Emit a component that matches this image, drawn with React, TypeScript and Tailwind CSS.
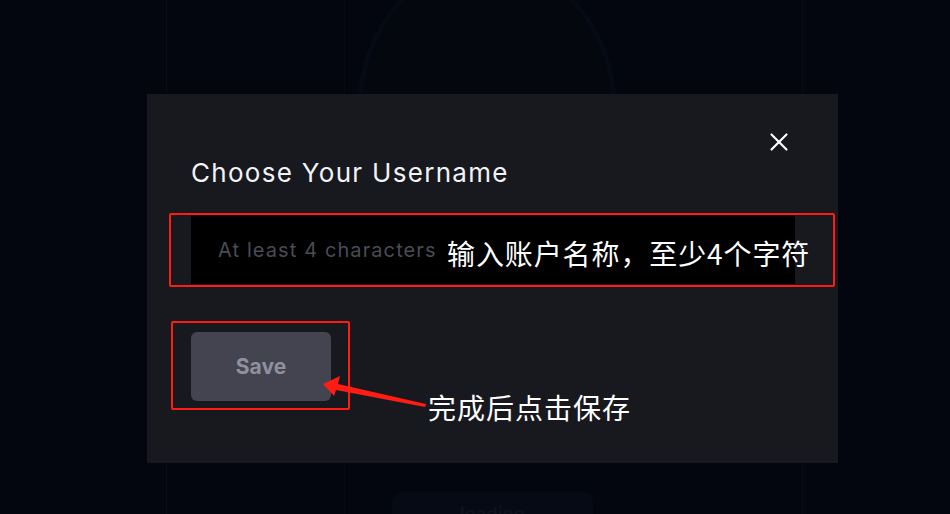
import React from "react";
import { X } from "lucide-react";

export default function App() {
  return (
    <div className="relative w-[950px] h-[514px] overflow-hidden bg-[#03060e] font-['Inter','Noto_Sans',sans-serif]">
      {/* faint page behind the overlay */}
      <div className="absolute inset-0 pointer-events-none">
        <div className="absolute left-[166px] top-0 h-[514px] w-px bg-[#090d16]" />
        <div className="absolute left-[344px] top-0 h-[514px] w-px bg-[#070a13]" />
        <div className="absolute left-[802px] top-0 h-[514px] w-px bg-[#090d16]" />
        <div className="absolute left-[357px] top-[-40px] w-[260px] h-[300px] rounded-[50%] border-[5px] border-[#050a15] bg-[#05070e]" />
        <div className="absolute left-[392px] top-[492px] w-[201px] h-[40px] rounded-[10px] bg-[#060a14] flex justify-center pt-[8px] text-[18px] font-bold text-[#0e121c]">
          loading
        </div>
      </div>

      {/* modal */}
      <div className="relative pt-[94px] pl-[147px]">
        <div className="relative w-[691px] h-[369px] bg-[#18191e] px-[44px] pt-[58px]">
          <button className="absolute right-[44px] top-[33px] text-white">
            <X size={30} strokeWidth={1.7} />
          </button>
          <h2 className="text-[26px] leading-[42px] text-[#f2f3f5] font-normal tracking-[1.3px]">
            Choose Your Username
          </h2>
          <div className="mt-[21px] w-[604px] h-[69px] bg-black flex items-center pl-[27px]">
            <span className="text-[20px] tracking-[1.1px] text-[#4a4c56]">At least 4 characters</span>
          </div>
          <button className="mt-[48px] w-[140px] h-[69px] rounded-[6px] bg-[#43444f] text-[21px] font-bold text-[#8e909f]">
            Save
          </button>
        </div>
      </div>

      {/* annotations */}
      <div className="absolute left-[169px] top-[213px] w-[666px] h-[74px] border-[2.5px] border-[#ff1c12] rounded-[2px]" />
      <div className="absolute left-[447px] top-[234px] text-[28px] leading-[38px] text-white font-['Noto_Sans_CJK_SC',sans-serif] whitespace-nowrap tracking-[0.9px]">
        输入账户名称，至少4个字符
      </div>
      <div className="absolute left-[171px] top-[321px] w-[179px] h-[89px] border-[2.5px] border-[#ff1c12] rounded-[2px]" />
      <svg className="absolute left-0 top-0" width="950" height="514" viewBox="0 0 950 514">
        <polygon
          points="323,384 340,376 338,384 426,404 425,407 336,390 334,396"
          fill="#ff1c12"
        />
      </svg>
      <div className="absolute left-[428px] top-[388px] text-[28px] leading-[38px] text-white font-['Noto_Sans_CJK_SC',sans-serif] whitespace-nowrap tracking-[1px]">
        完成后点击保存
      </div>
    </div>
  );
}
